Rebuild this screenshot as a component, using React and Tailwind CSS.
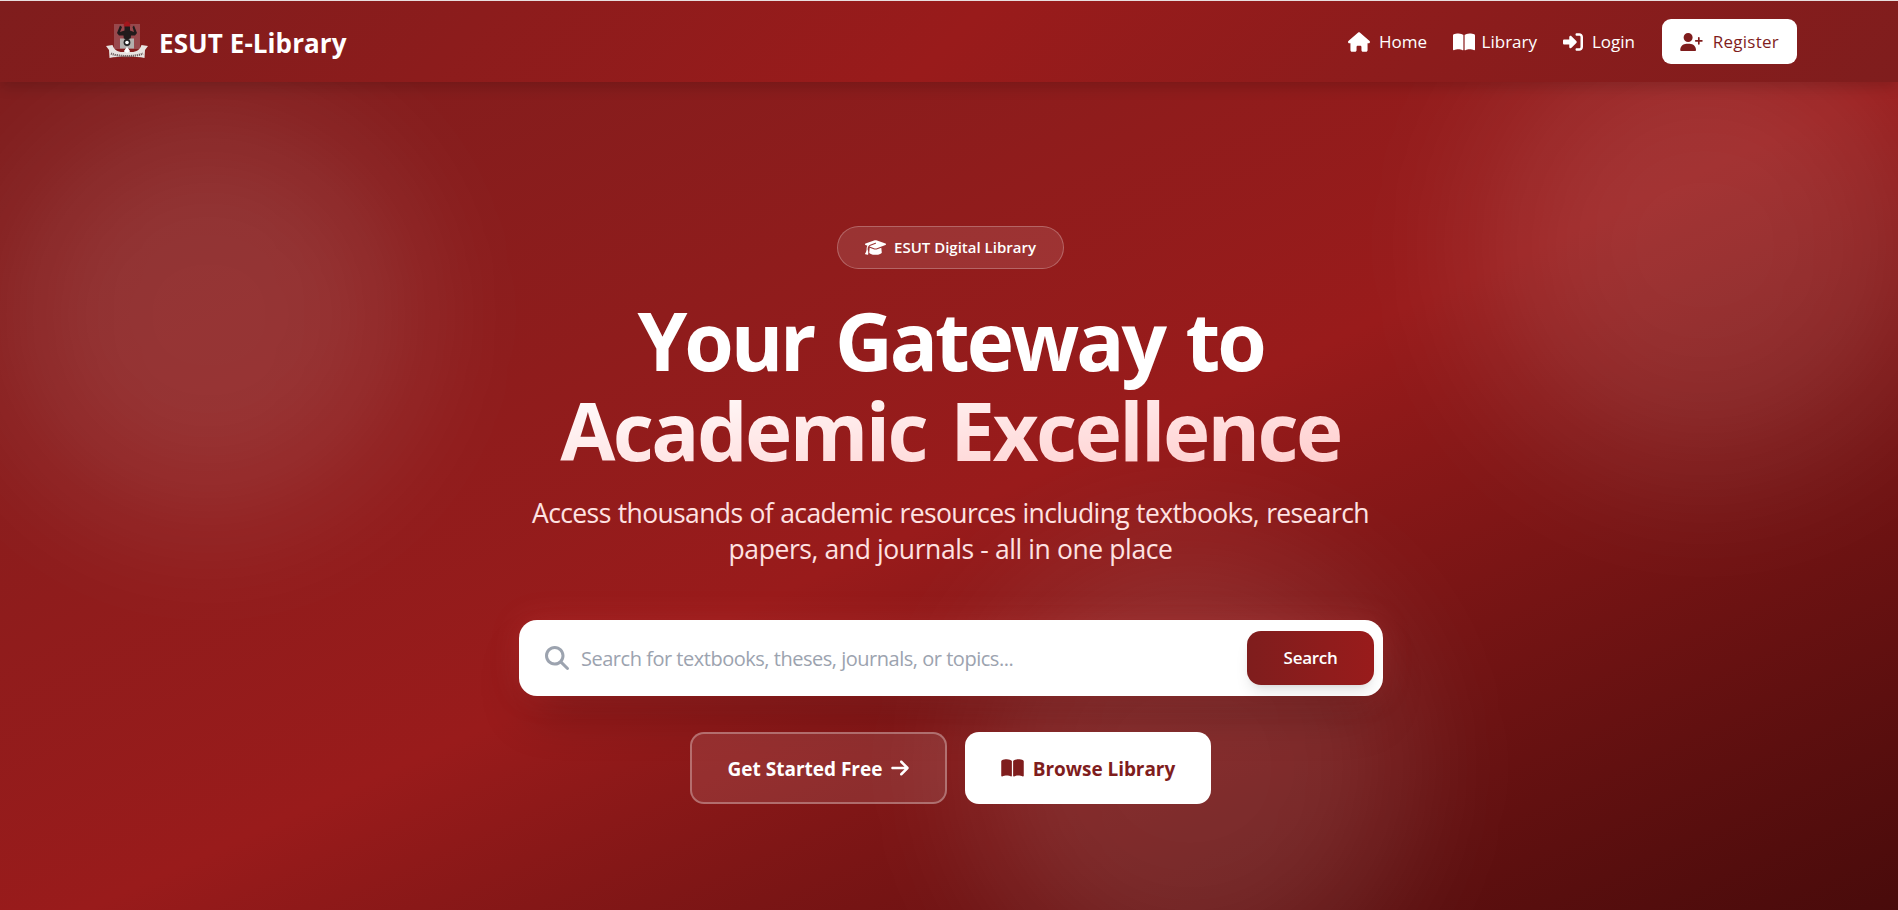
import { FaHouse, FaBookOpen, FaUserPlus, FaGraduationCap, FaMagnifyingGlass, FaArrowRight, FaRightToBracket } from 'react-icons/fa6';

function Crest() {
  return (
    <svg viewBox="0 0 42 38" className="-mt-1 h-[38px] w-[42px] shrink-0">
      <rect x="8" y="3" width="26" height="25" fill="#98484c" />
      <path d="M17.5 4 L19 1.5 L21 0 L23 1.5 L24.5 4 L23 7 L19 7Z" fill="#a3161c" />
      <path d="M14 4.500 L11 12 L13 14.500 L17.500 14.500 L18 20 H24.500 L25 14.500 H29 L31 12 L28 4.500 L26.500 6 L28 11 L24 9.500 V5.500 H18.500 V9.500 L14 11 L16 6Z" fill="#211b1c" />
      <path d="M14 17.500 h4 l3 2 l3 -2 h4 v10 h-14z" fill="#b3afad" />
      <circle cx="21" cy="21.500" r="3.400" fill="#222" />
      <circle cx="21" cy="21.500" r="1.800" fill="#fff" />
      <path d="M0 25 L6.500 24 C8 29 12 31.500 18 31 L21 26 L24 31 C30 31.500 34 29 35.500 24 L42 25 L39 29 L38.500 37 C30 35 12 35 3.500 37 L3 29Z" fill="#e8e4e1" />
      <path d="M5 32.500 C13 36 29 36 37 32.500" fill="none" stroke="#6d6060" strokeWidth="2.200" strokeDasharray="1.200 .8" />
      <path d="M18 30 L21 26 L24 30 L21 32Z" fill="#fff" />
    </svg>
  );
}

function NavLink({ icon: Icon, label, width, iconSize }) {
  return (
    <a href="#" className={`flex items-center justify-between ${width}`}>
      <Icon className={`shrink-0 ${iconSize}`} />
      <span>{label}</span>
    </a>
  );
}

export default function App() {
  return (
    <div className="h-[910px] overflow-hidden bg-[#7f1d1d] font-['Open_Sans','Noto_Sans',sans-serif] text-white">
      <nav className="relative z-10 flex h-[82px] items-center justify-between border-t border-[#e8dede] bg-linear-[135deg,#7f1d1d,#991b1b_50%,#7f1d1d] pr-[101px] pl-[106px] shadow-[0_8px_12px_-2px_rgba(0,0,0,.14)]">
        <a href="#" className="flex items-center gap-[11px]">
          <Crest />
          <span className="mt-[2px] text-[26px] leading-8 font-bold tracking-[0.08px]">ESUT E-Library</span>
        </a>
        <div className="flex items-center text-[17px] leading-6">
          <NavLink icon={FaHouse} label="Home" width="mr-[26px] w-[79px]" iconSize="h-[20px] w-[22px]" />
          <NavLink icon={FaBookOpen} label="Library" width="mr-[26px] w-[84px]" iconSize="h-[20px] w-[22px]" />
          <NavLink icon={FaRightToBracket} label="Login" width="mr-[27px] w-[72px]" iconSize="size-[20px]" />
          <a href="#" className="flex h-[45px] w-[135px] items-center justify-between rounded-[9px] bg-white pr-[18px] pl-[18px] font-medium text-[#7f1d1d]">
            <FaUserPlus className="h-[18px] w-[23px] shrink-0" />
            <span className="tracking-[0.25px]">Register</span>
          </a>
        </div>
      </nav>

      <main className="relative h-[866px] overflow-hidden bg-linear-to-br from-[#7f1d1d] via-[#991b1b] via-50% to-[#450a0a]">
        <div className="absolute top-[28px] left-[4px] size-[410px] rounded-full bg-white/11 blur-[72px]" />
        <div className="absolute top-[-62px] left-[1480px] size-[450px] rounded-full bg-white/11 blur-[76px]" />
        <div className="absolute top-[465px] left-[970px] size-[440px] rounded-full bg-white/11 blur-[68px]" />

        <div className="relative flex flex-col items-center pt-[144px] pl-[3px]">
          <div className="flex h-[43px] w-[227px] items-center justify-center gap-2 rounded-full border border-white/25 bg-white/10 text-[15px] font-semibold">
            <FaGraduationCap className="h-[17px] w-[21px] shrink-0" />
            <span>ESUT Digital Library</span>
          </div>

          <h1 className="mt-[26px] text-center text-[80px] leading-[90px] font-bold">
            <span className="block tracking-[-3.1px] [word-spacing:4px]">Your Gateway to</span>
            <span className="block bg-linear-to-br from-white to-[#fecaca] bg-clip-text tracking-[-2.6px] text-transparent [word-spacing:6px]">Academic Excellence</span>
          </h1>

          <p className="mt-[20px] text-center text-[26.5px] leading-9 text-[#fee2e2]">
            <span className="block tracking-[-0.62px] [word-spacing:0.8px]">Access thousands of academic resources including textbooks, research</span>
            <span className="block tracking-[-0.4px]">papers, and journals - all in one place</span>
          </p>

          <div className="mt-[53px] ml-px flex h-[76px] w-[864px] items-center rounded-[18px] bg-white pr-[9px] pl-[26px] shadow-[0_25px_50px_-12px_rgba(0,0,0,.25),0_0_30px_rgba(255,90,90,.2)]">
            <FaMagnifyingGlass className="size-[24px] text-[#9ca3af]" />
            <span className="mt-px ml-3 grow text-[20px] tracking-[-0.48px] text-[#9ca3af]">Search for textbooks, theses, journals, or topics...</span>
            <button className="h-[54px] w-[127px] rounded-[14px] bg-linear-to-r from-[#7f1d1d] to-[#991b1b] text-[17px] font-semibold tracking-[-0.3px] shadow-lg">Search</button>
          </div>

          <div className="mt-9 flex gap-[18px]">
            <button className="flex h-[72px] w-[257px] items-center justify-center gap-[9px] rounded-[14px] border-2 border-white/30 bg-white/10 text-[19px] font-bold">
              <span className="pt-[2px]">Get Started Free</span>
              <FaArrowRight className="h-[20px] w-[18px] shrink-0" />
            </button>
            <button className="flex h-[72px] w-[246px] items-center justify-center gap-[9px] rounded-[14px] bg-white text-[19px] font-bold text-[#7f1d1d]">
              <FaBookOpen className="h-[20px] w-[23px] shrink-0" />
              <span className="pt-[2px] tracking-[-0.05px]">Browse Library</span>
            </button>
          </div>
        </div>
      </main>
    </div>
  );
}
